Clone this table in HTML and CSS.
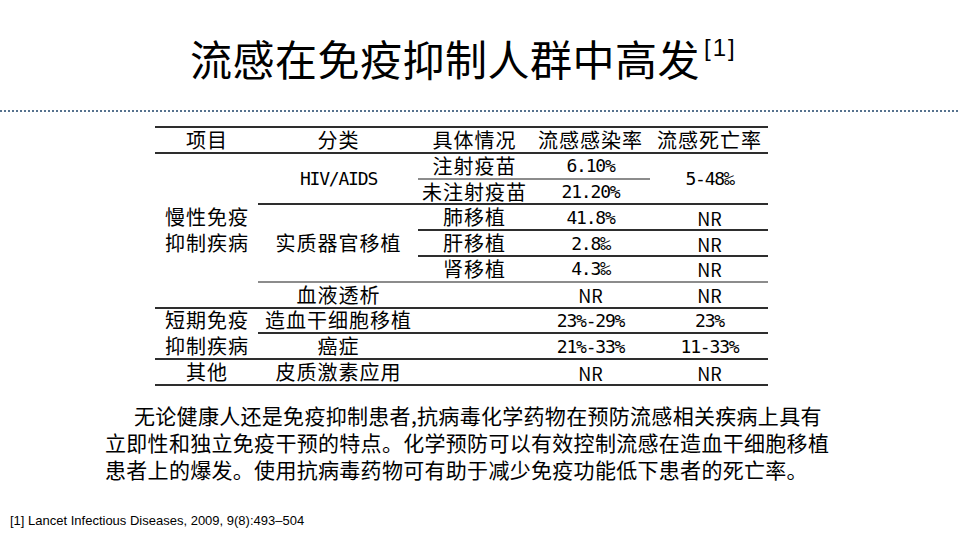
FILE: index.html
```html
<!DOCTYPE html>
<html lang="zh-CN">
<head>
<meta charset="utf-8">
<title>流感在免疫抑制人群中高发</title>
<link rel="stylesheet" href="styles.css">
</head>
<body>
<div class="slide">
  <h1 class="title">流感在免疫抑制人群中高发<sup class="ref">[1]</sup></h1>
  <div class="rule"></div>
  <div class="tbl">
    <div class="c h r1 c1 bd">项目</div>
    <div class="c h r1 c2 bd">分类</div>
    <div class="c h r1 c3 bd">具体情况</div>
    <div class="c h r1 c4 bd">流感感染率</div>
    <div class="c h r1 c5 bd">流感死亡率</div>

    <div class="c cat chronic bd">慢性免疫<br>抑制疾病</div>
    <div class="c hiv num bd">HIV/AIDS</div>
    <div class="c c3 r2 bg">注射疫苗</div>
    <div class="c c4 r2 num bg">6.10%</div>
    <div class="c mort num bd">5-48‰</div>
    <div class="c c3 r3 bd">未注射疫苗</div>
    <div class="c c4 r3 num bd">21.20%</div>

    <div class="c organ bg">实质器官移植</div>
    <div class="c c3 r4 bd">肺移植</div>
    <div class="c c4 r4 num bd">41.8%</div>
    <div class="c c5 r4 nr bd">NR</div>
    <div class="c c3 r5 bd">肝移植</div>
    <div class="c c4 r5 num bd">2.8‰</div>
    <div class="c c5 r5 nr bd">NR</div>
    <div class="c c3 r6 bg">肾移植</div>
    <div class="c c4 r6 num bg">4.3‰</div>
    <div class="c c5 r6 nr bg">NR</div>

    <div class="c c2 r7 bd">血液透析</div>
    <div class="c c3 r7 bd"></div>
    <div class="c c4 r7 nr bd">NR</div>
    <div class="c c5 r7 nr bd">NR</div>

    <div class="c shortterm bd">短期免疫<br>抑制疾病</div>
    <div class="c c2 r8 bd">造血干细胞移植</div>
    <div class="c c3 r8 bd"></div>
    <div class="c c4 r8 num bd">23%-29%</div>
    <div class="c c5 r8 num bd">23%</div>
    <div class="c c2 r9 bd">癌症</div>
    <div class="c c3 r9 bd"></div>
    <div class="c c4 r9 num bd">21%-33%</div>
    <div class="c c5 r9 num bd">11-33%</div>

    <div class="c c1 r10 bd">其他</div>
    <div class="c c2 r10 bd">皮质激素应用</div>
    <div class="c c3 r10 bd"></div>
    <div class="c c4 r10 nr bd">NR</div>
    <div class="c c5 r10 nr bd">NR</div>
  </div>
  <p class="para">无论健康人还是免疫抑制患者,抗病毒化学药物在预防流感相关疾病上具有立即性和独立免疫干预的特点。化学预防可以有效控制流感在造血干细胞移植患者上的爆发。使用抗病毒药物可有助于减少免疫功能低下患者的死亡率。</p>
  <p class="foot">[1] Lancet Infectious Diseases, 2009, 9(8):493–504</p>
</div>
</body>
</html>
```

FILE: styles.css
```css
html, body {
  margin: 0;
  padding: 0;
  background: #ffffff;
}

.slide {
  width: 960px;
  height: 540px;
  overflow: hidden;
  display: flex;
  flex-direction: column;
  color: #000;
  font-family: "Noto Sans CJK SC", "Noto Sans", sans-serif;
}

.title {
  margin: 33px 0 0 0;
  padding-left: 190px;
  font-size: 42px;
  line-height: 50px;
  font-weight: 400;
  letter-spacing: 0.5px;
  white-space: nowrap;
}

.ref {
  font-family: "Liberation Sans", Arial, sans-serif;
  font-size: 24px;
  letter-spacing: 2px;
  vertical-align: 20px;
  line-height: 0;
  margin-left: 4px;
}

.rule {
  margin-top: 27px;
  height: 2px;
  background: repeating-linear-gradient(90deg, #56728e 0 2.5px, transparent 2.5px 4px);
}

.tbl {
  margin: 14px 0 0 155px;
  width: 613px;
  display: grid;
  grid-template-columns: 103px 160px 112px 120px 118px;
  grid-template-rows: repeat(10, 25.8px);
  border-top: 2px solid #2e2e2e;
  font-size: 20px;
  letter-spacing: 1px;
}

.c {
  display: flex;
  align-items: center;
  justify-content: center;
  text-align: center;
  line-height: 24px;
  box-sizing: border-box;
  white-space: nowrap;
  padding-left: 1px;
}

.bd { border-bottom: 2px solid #2e2e2e; }
.bg { border-bottom: 2px solid #8c8c8c; }

.num {
  font-family: "DejaVu Sans Mono", "Noto Sans CJK SC", monospace;
  font-size: 18px;
  letter-spacing: -1.2px;
  padding-top: 1px;
}

.nr {
  font-family: "Noto Sans CJK SC", "Noto Sans", sans-serif;
  font-size: 18px;
  letter-spacing: 0;
  padding-top: 1px;
}

.c1 { grid-column: 1; }
.c2 { grid-column: 2; }
.c3 { grid-column: 3; }
.c4 { grid-column: 4; }
.c5 { grid-column: 5; }

.r1 { grid-row: 1; }
.r2 { grid-row: 2; }
.r3 { grid-row: 3; }
.r4 { grid-row: 4; }
.r5 { grid-row: 5; }
.r6 { grid-row: 6; }
.r7 { grid-row: 7; }
.r8 { grid-row: 8; }
.r9 { grid-row: 9; }
.r10 { grid-row: 10; }

.chronic { grid-column: 1; grid-row: 2 / 8; line-height: 26px; }
.hiv { grid-column: 2; grid-row: 2 / 4; }
.mort { grid-column: 5; grid-row: 2 / 4; }
.organ { grid-column: 2; grid-row: 4 / 7; }
.shortterm { grid-column: 1; grid-row: 8 / 10; line-height: 26px; }

.para {
  margin: 16px 0 0 105px;
  width: 728px;
  font-size: 21px;
  line-height: 27px;
  letter-spacing: 0.3px;
  text-indent: 29px;
}

.foot {
  margin: 31px 0 0 10px;
  font-family: "Liberation Sans", Arial, sans-serif;
  font-size: 13px;
  line-height: 14px;
}
```
